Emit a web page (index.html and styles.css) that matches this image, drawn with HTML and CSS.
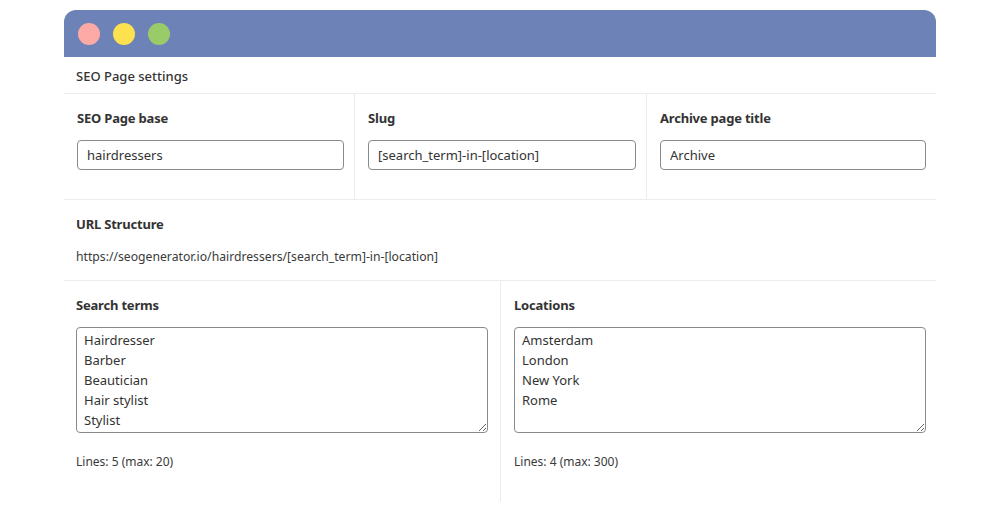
FILE: index.html
```html
<!DOCTYPE html>
<html>
<head>
<meta charset="utf-8">
<link rel="stylesheet" href="styles.css">
</head>
<body>
<div class="window">
  <div class="titlebar">
    <span class="dot dot-red"></span>
    <span class="dot dot-yellow"></span>
    <span class="dot dot-green"></span>
  </div>
  <div class="section-title">SEO Page settings</div>
  <div class="row-three">
    <div class="col">
      <div class="label">SEO Page base</div>
      <input class="field" type="text" value="hairdressers">
    </div>
    <div class="col">
      <div class="label">Slug</div>
      <input class="field" type="text" value="[search_term]-in-[location]">
    </div>
    <div class="col">
      <div class="label">Archive page title</div>
      <input class="field" type="text" value="Archive">
    </div>
  </div>
  <div class="url-section">
    <div class="label">URL Structure</div>
    <div class="url">https://seogenerator.io/hairdressers/[search_term]-in-[location]</div>
  </div>
  <div class="row-two">
    <div class="col2">
      <div class="label">Search terms</div>
      <textarea class="area">Hairdresser
Barber
Beautician
Hair stylist
Stylist</textarea>
      <div class="count">Lines: 5 (max: 20)</div>
    </div>
    <div class="col2">
      <div class="label">Locations</div>
      <textarea class="area">Amsterdam
London
New York
Rome</textarea>
      <div class="count">Lines: 4 (max: 300)</div>
    </div>
  </div>
</div>
</body>
</html>
```

FILE: styles.css
```css
* { box-sizing: border-box; }
html, body { margin: 0; background: #fff; }
body {
  padding-top: 10px;
  font-family: "Noto Sans", "Open Sans", sans-serif;
  font-size: 13px;
  color: #3a3a3a;
}
.window {
  width: 872px;
  margin: 0 auto;
  background: #fff;
}
.titlebar {
  height: 47px;
  background: #6d82b7;
  border-radius: 12px 12px 0 0;
  display: flex;
  align-items: center;
  padding-left: 14px;
  gap: 13px;
}
.dot {
  width: 22px;
  height: 22px;
  border-radius: 50%;
  display: block;
}
.dot-red { background: #fdaaa6; }
.dot-yellow { background: #fde14f; }
.dot-green { background: #9acb69; }
.section-title {
  height: 37px;
  line-height: 38px;
  padding: 0 12px;
  border-bottom: 1px solid #ececec;
  font-weight: 500;
  color: #333;
}
.row-three {
  display: grid;
  grid-template-columns: 291px 292px 1fr;
  border-bottom: 1px solid #ececec;
  height: 106px;
}
.col {
  padding: 15px 10px 0 13px;
  border-right: 1px solid #ececec;
}
.col:last-child { border-right: none; }
.label {
  font-weight: 700;
  line-height: 18px;
  color: #333;
  letter-spacing: -0.2px;
}
.field {
  display: block;
  margin-top: 13px;
  width: 100%;
  height: 30px;
  border: 1px solid #8a8a8a;
  border-radius: 4px;
  padding: 0 9px;
  font-family: inherit;
  font-size: 13px;
  color: #333;
  background: #fff;
}
.url-section {
  height: 81px;
  padding: 15px 12px 0;
  border-bottom: 1px solid #ececec;
}
.url {
  margin-top: 15px;
  line-height: 18px;
  font-size: 12.2px;
  color: #3a3a3a;
}
.row-two {
  display: grid;
  grid-template-columns: 437px 1fr;
  height: 221px;
}
.col2 {
  padding: 15px 12px 0 12px;
  border-right: 1px solid #ececec;
}
.col2:last-child { border-right: none; padding-left: 13px; padding-right: 10px; }
.area {
  display: block;
  margin-top: 13px;
  width: 100%;
  height: 106px;
  border: 1px solid #8a8a8a;
  border-radius: 4px;
  padding: 2px 7px;
  font-family: inherit;
  font-size: 13px;
  line-height: 20px;
  color: #333;
  resize: vertical;
  overflow: hidden;
}
.count {
  margin-top: 20px;
  line-height: 18px;
  font-size: 12px;
  color: #3a3a3a;
}
```
